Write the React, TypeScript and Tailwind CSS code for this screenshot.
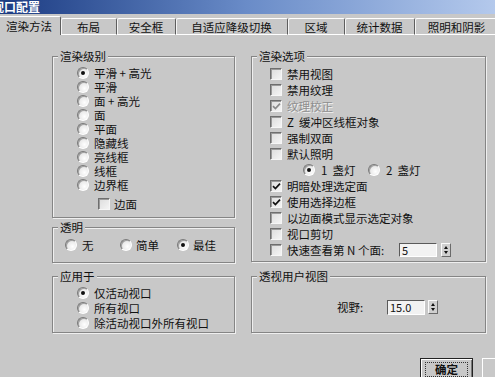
import React from "react";

function Radio({ checked = false }: { checked?: boolean }) {
  return (
    <span className="flex h-[12px] w-[12px] shrink-0 items-center justify-center rounded-full border border-t-[#7a7a7a] border-l-[#7a7a7a] border-b-[#ffffff] border-r-[#ffffff] bg-[radial-gradient(circle_at_65%_65%,#ffffff,#d8d8d8)] shadow-[inset_1px_1px_0_#a0a0a0]">
      {checked && <span className="h-[4px] w-[4px] rounded-full bg-[#111]" />}
    </span>
  );
}

function Check({ checked = false, disabled = false }: { checked?: boolean; disabled?: boolean }) {
  return (
    <span className="flex h-[12px] w-[12px] shrink-0 items-center justify-center border border-t-[#6e6e6e] border-l-[#6e6e6e] border-b-[#f6f6f6] border-r-[#f6f6f6] bg-[linear-gradient(135deg,#dcdcdc,#f4f4f4)] shadow-[inset_1px_1px_0_#9a9a9a]">
      {checked && (
        <svg width="9" height="9" viewBox="0 0 9 9">
          <path
            d="M1 4.2 L3.4 6.6 L8 1.6"
            fill="none"
            stroke={disabled ? "#8a8a8a" : "#111"}
            strokeWidth="1.7"
          />
        </svg>
      )}
    </span>
  );
}

function Spin() {
  return (
    <span className="flex h-[14px] w-[10px] flex-col items-center justify-center gap-[2px] border border-t-[#fafafa] border-l-[#fafafa] border-b-[#6a6a6a] border-r-[#6a6a6a] bg-[#d0d0d0]">
      <span className="h-0 w-0 border-x-[2.5px] border-b-[3px] border-x-transparent border-b-[#111]" />
      <span className="h-0 w-0 border-x-[2.5px] border-t-[3px] border-x-transparent border-t-[#111]" />
    </span>
  );
}

function Group({
  title,
  className,
  children,
}: {
  title: string;
  className: string;
  children: React.ReactNode;
}) {
  return (
    <fieldset
      className={`border border-[#858585] shadow-[1px_1px_0_#efefef,inset_1px_1px_0_#efefef] ${className}`}
    >
      <legend className="ml-[5px] bg-[#c8c8c8] px-[2px] text-[11.5px] leading-[14px]">{title}</legend>
      {children}
    </fieldset>
  );
}

const levels = ["平滑 + 高光", "平滑", "面 + 高光", "面", "平面", "隐藏线", "亮线框", "线框", "边界框"];

const tabs = [
  { label: "渲染方法", w: "w-[69px]", active: true },
  { label: "布局", w: "w-[56px]" },
  { label: "安全框", w: "w-[59px]" },
  { label: "自适应降级切换", w: "w-[112px]" },
  { label: "区域", w: "w-[57px]" },
  { label: "统计数据", w: "w-[70px]" },
  { label: "照明和阴影", w: "w-[84px]" },
];

export default function App() {
  return (
    <div className="relative h-[377px] w-[495px] overflow-hidden bg-[#c8c8c8] font-['Noto_Sans_CJK_SC',sans-serif] text-[11.5px] text-[#111]">
      <div className="flex h-[14px] items-center bg-gradient-to-r from-[#1c3b82] via-[#6a8cc8] to-[#b4c9ec] text-[12px] font-bold leading-[14px] text-white">
        <span className="-ml-[8px]">视口配置</span>
      </div>

      <div className="-ml-[8px] mt-[2px] flex h-[19px] items-end">
        {tabs.map((t) =>
          t.active ? (
            <div
              key={t.label}
              className={`${t.w} flex h-[19px] shrink-0 items-center justify-center rounded-t-[2px] border-l border-t border-r border-l-white border-t-white border-r-[#5e5e5e] pl-[5px] leading-[14px]`}
            >
              {t.label}
            </div>
          ) : (
            <div
              key={t.label}
              className={`${t.w} flex h-[17px] shrink-0 items-center justify-center rounded-t-[2px] border-t border-r border-b border-t-white border-r-[#5e5e5e] border-b-white pt-[1px] leading-[14px] shadow-[inset_1px_0_0_#f4f4f4]`}
            >
              {t.label}
            </div>
          )
        )}
      </div>

      <div className="flex gap-[16px] pl-[52px] pt-[14px]">
        <div className="flex w-[183px] flex-col">
          <Group title="渲染级别" className="h-[169px]">
            <div className="flex flex-col pl-[24px] pt-[3px]">
              {levels.map((l, i) => (
                <div key={l} className="flex h-[14px] items-center gap-[5px] leading-[14px]">
                  <Radio checked={i === 0} />
                  <span className="whitespace-pre">{l}</span>
                </div>
              ))}
              <div className="mt-[5px] flex h-[14px] items-center gap-[4px] pl-[21px] leading-[14px]">
                <Check />
                <span>边面</span>
              </div>
            </div>
          </Group>

          <Group title="透明" className="mt-[2px] h-[43px]">
            <div className="flex items-center pl-[12px] pt-[4px] leading-[14px]">
              <div className="flex w-[55px] items-center gap-[5px]">
                <Radio />
                <span>无</span>
              </div>
              <div className="flex w-[57px] items-center gap-[4px]">
                <Radio />
                <span>简单</span>
              </div>
              <div className="flex items-center gap-[4px]">
                <Radio checked />
                <span>最佳</span>
              </div>
            </div>
          </Group>

          <Group title="应用于" className="mt-[6px] h-[64px]">
            <div className="flex flex-col pl-[24px] pt-[2px]">
              {["仅活动视口", "所有视口", "除活动视口外所有视口"].map((l, i) => (
                <div key={l} className="flex h-[15px] items-center gap-[5px] leading-[14px]">
                  <Radio checked={i === 0} />
                  <span>{l}</span>
                </div>
              ))}
            </div>
          </Group>
        </div>

        <div className="flex w-[235px] flex-col">
          <Group title="渲染选项" className="h-[213px]">
            <div className="flex flex-col pl-[18px] pt-[3px] leading-[14px]">
              {[
                { l: "禁用视图" },
                { l: "禁用纹理" },
                { l: "纹理校正", c: true, d: true },
                { l: "Z  缓冲区线框对象" },
                { l: "强制双面" },
                { l: "默认照明" },
              ].map((r) => (
                <div key={r.l} className="flex h-[16px] items-center gap-[5px]">
                  <Check checked={r.c} disabled={r.d} />
                  <span
                    className={`whitespace-pre ${r.d ? "text-[#8e8e8e] [text-shadow:1px_1px_0_#f2f2f2]" : ""}`}
                  >
                    {r.l}
                  </span>
                </div>
              ))}
              <div className="flex h-[16px] items-center pl-[33px]">
                <div className="flex w-[65px] items-center gap-[6px]">
                  <Radio checked />
                  <span className="whitespace-pre">1  盏灯</span>
                </div>
                <div className="flex items-center gap-[6px]">
                  <Radio />
                  <span className="whitespace-pre">2  盏灯</span>
                </div>
              </div>
              {[
                { l: "明暗处理选定面", c: true },
                { l: "使用选择边框", c: true },
                { l: "以边面模式显示选定对象" },
                { l: "视口剪切" },
              ].map((r) => (
                <div key={r.l} className="flex h-[16px] items-center gap-[5px]">
                  <Check checked={r.c} />
                  <span>{r.l}</span>
                </div>
              ))}
              <div className="flex h-[16px] items-center gap-[5px]">
                <Check />
                <span className="w-[107px] whitespace-pre">快速查看第 N 个面:</span>
                <span className="flex h-[14px] w-[38px] items-center border border-t-[#5a5a5a] border-l-[#5a5a5a] border-b-white border-r-white bg-[#f2f2f2] pl-[2px] text-[11px] leading-[12px]">
                  5
                </span>
                <span className="ml-[-1px]">
                  <Spin />
                </span>
              </div>
            </div>
          </Group>

          <Group title="透视用户视图" className="mt-[7px] h-[64px]">
            <div className="mt-[16px] flex h-[16px] items-center pl-[85px] leading-[14px]">
              <span className="w-[50px]">视野:</span>
              <span className="flex h-[15px] w-[38px] items-center border border-t-[#5a5a5a] border-l-[#5a5a5a] border-b-white border-r-white bg-[#f2f2f2] pl-[2px] text-[11px] leading-[12px]">
                15.0
              </span>
              <span className="ml-[3px]">
                <Spin />
              </span>
            </div>
          </Group>
        </div>
      </div>

      <div className="mt-[25px] flex gap-[9px] pl-[420px]">
        <div className="flex h-[23px] w-[53px] shrink-0 items-center justify-center border border-[#222] bg-[#c8c8c8] shadow-[inset_1px_1px_0_#fff,inset_-1px_-1px_0_#777]">
          <span className="flex h-[15px] w-[43px] items-center justify-center border border-dotted border-[#333] font-bold leading-[13px]">
            确定
          </span>
        </div>
        <div className="h-[23px] w-[53px] shrink-0 border border-t-white border-l-white border-b-[#555] border-r-[#555]" />
      </div>
    </div>
  );
}
